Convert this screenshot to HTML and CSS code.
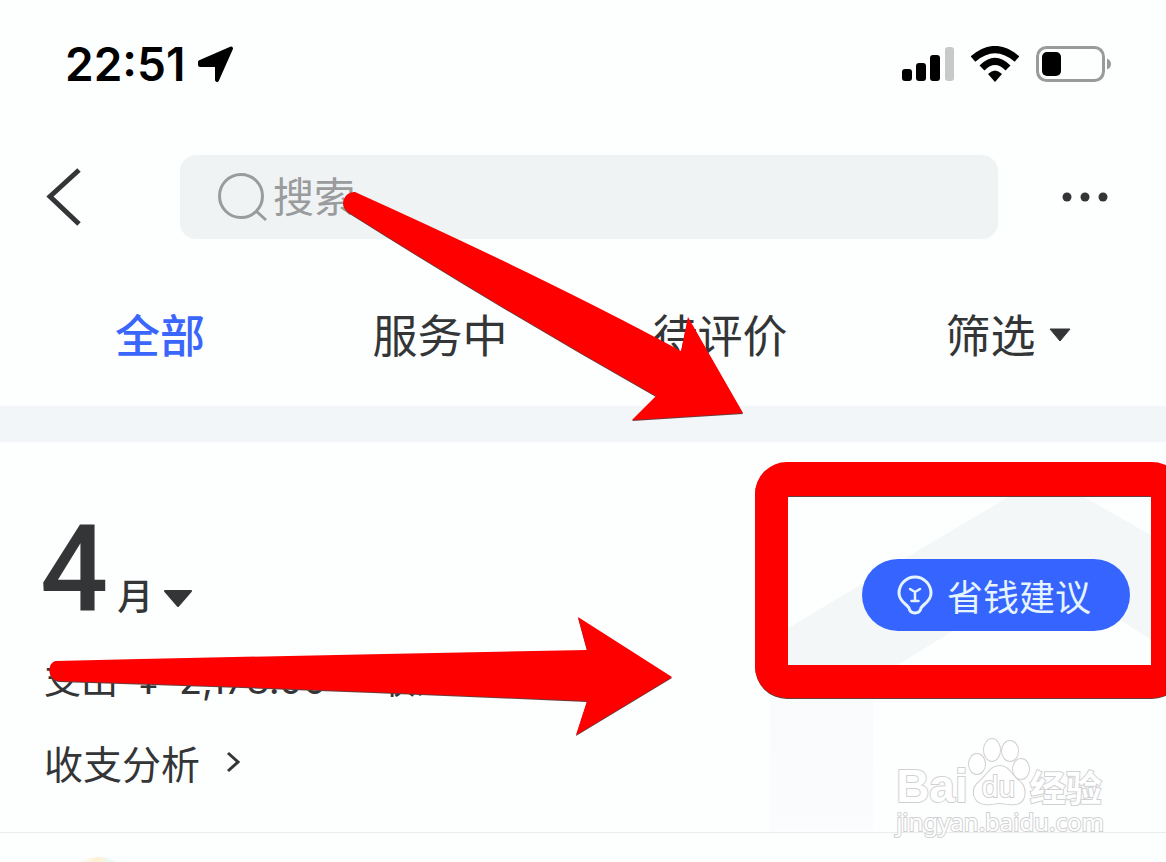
FILE: index.html
```html
<!DOCTYPE html>
<html lang="zh-CN">
<head>
	<meta charset="utf-8">
	<title>账单</title>
	<meta name="viewport" content="width=device-width, initial-scale=1">
	<link rel="stylesheet" href="styles.css">
</head>
<body>
	<div class="status-bar">
		<div class="status-left">
			<span class="clock">22:51</span>
			<svg width="38" height="38" viewBox="0 0 38 38">
				<path d="M3 17 34 3.500 20 35V20H3Z" stroke="#000" stroke-width="4" stroke-linejoin="round"/>
			</svg>
		</div>
		<div class="status-right">
			<svg width="54" height="36" viewBox="0 0 54 36">
				<rect x="2" y="23" width="10" height="12" rx="3"/>
				<rect x="16" y="17" width="10" height="18" rx="3"/>
				<rect x="30" y="9" width="10" height="26" rx="3"/>
				<rect x="45" y="1" width="9" height="34" rx="3" fill="#c9c9c9"/>
			</svg>
			<svg width="48" height="36" viewBox="0 0 48 36">
				<path d="M2 13Q24-6 46 13M11 22Q24 9 37 22" fill="none" stroke="#000" stroke-width="7"/>
				<path d="M17 28Q24 21 31 28L24 36Z"/>
			</svg>
			<svg width="76" height="36" viewBox="0 0 76 36">
				<rect x="1.500" y="1.500" width="66" height="33" rx="9" fill="none" stroke="#9a9a9c" stroke-width="3"/>
				<rect x="6" y="6" width="19" height="24" rx="5"/>
				<path d="M71 12.500Q75 14 75 18T71 23.500Z" fill="#9a9a9c"/>
			</svg>
		</div>
	</div>

	<header class="top-nav">
		<button class="icon-button" aria-label="返回">
			<svg width="38" height="58" viewBox="0 0 38 58"><path d="M35 2 6 28.500 35 56" fill="none" stroke="#333536" stroke-width="5"/></svg>
		</button>
		<label class="search-box">
			<svg width="50" height="50" viewBox="0 0 50 50">
				<circle cx="23" cy="24" r="21.500"/>
				<path d="M38 39 48 48"/>
			</svg>
			<input type="search" placeholder="搜索" aria-label="搜索">
		</label>
		<button class="icon-button" aria-label="更多">
			<svg width="46" height="10" viewBox="0 0 46 10" fill="#333536"><circle cx="5" cy="5" r="4.500"/><circle cx="23" cy="5" r="4.500"/><circle cx="41" cy="5" r="4.500"/></svg>
		</button>
	</header>

	<nav class="tabs">
		<button class="tab active">全部</button>
		<button class="tab">服务中</button>
		<button class="tab">待评价</button>
		<button class="tab">筛选
			<svg width="22" height="18" viewBox="0 0 22 18"><path d="M1 5H21L11 17Z" fill="#333536" stroke="#333536" stroke-linejoin="round"/></svg>
		</button>
	</nav>

	<main class="summary">
		<svg class="backdrop" width="396" height="389" viewBox="0 0 396 389">
			<defs>
				<linearGradient id="fade" x1="0" y1="0" x2="0" y2="1"><stop offset="0" stop-color="#f5f8fa"/><stop offset="1" stop-color="#fbfcfd"/></linearGradient>
			</defs>
			<path d="M0 197 240 54Q276 33 312 54L396 102V207L306 150Q276 132 246 150L103 238V389H0Z" fill="url(#fade)"/>
			<path d="M0 197 240 54Q276 33 312 54L396 102V207L306 150Q276 132 246 150L103 238H0Z" fill="#f4f7f8"/>
		</svg>
		<div class="summary-head">
			<button class="month">
				<span class="month-number">4</span>
				<span class="month-unit">月</span>
				<svg width="30" height="20" viewBox="0 0 30 20"><path d="M2 1H28L15 16Z" fill="#333536" stroke="#333536" stroke-width="2" stroke-linejoin="round"/></svg>
			</button>
			<button class="advice">
				<svg width="36" height="40" viewBox="0 0 36 40" fill="none" stroke="#e6f4ff" stroke-width="3" stroke-linecap="round" stroke-linejoin="round">
					<path d="M12 33C10 29 2 27 2 18A16 16 0 0 1 34 18C34 27 26 29 24 33Q23 38 18 38T12 33Z"/>
					<path d="M13 14 18 17 23 14M18 17V26M14.500 26H21.500" stroke-width="2.500"/>
				</svg>
				省钱建议
			</button>
		</div>
		<p class="totals"><span>支出</span><span class="amount">¥</span><span class="amount">2,178.00</span><span class="income">收入</span></p>
		<a class="analysis" href="#">收支分析
			<svg width="14" height="22" viewBox="0 0 14 22"><path d="M2 2 12 11 2 20" fill="none" stroke="#333536" stroke-width="3"/></svg>
		</a>
	</main>

	<section class="records">
		<span class="record-icon"></span>
	</section>

	<div class="watermark">
		<div class="watermark-logo">
			<span class="watermark-latin">Bai</span>
			<span class="paw">
				<svg width="62" height="68" viewBox="0 0 62 68">
					<ellipse cx="9" cy="26" rx="8" ry="10"/><ellipse cx="24" cy="12" rx="8" ry="11"/>
					<ellipse cx="42" cy="13" rx="8" ry="10"/><ellipse cx="53" cy="31" rx="8" ry="10"/>
					<path d="M32 28C41 28 44 38 51 43C59 49 59 65 47 66C40 67 37 65 32 65S23 67 17 66C4 65 3 50 11 44C20 37 22 28 32 28Z"/>
				</svg>
				<span class="paw-text">du</span>
			</span>
			<span class="watermark-cn">经验</span>
		</div>
		<div class="watermark-url">jingyan.baidu.com</div>
	</div>

	<!-- red markers drawn over the page -->
	<svg class="markers" width="1180" height="740" viewBox="0 0 1180 740">
		<g class="marker-shadow">
			<path d="M355 192Q550 280 681 351L688 317 743 413 632 420 656 396Q500 308 348 212A11 11 0 0 1 355 192Z"/>
			<path d="M56 661Q320 655 587 650L578 617 672 677 576 735 587 701Q320 689 59 681C47 680 47 662 56 661Z"/>
			<path fill-rule="evenodd" d="M787 462H1152A32 32 0 0 1 1184 494V666A32 32 0 0 1 1152 698H787A32 32 0 0 1 755 666V494A32 32 0 0 1 787 462ZM788 496V665H1151V496Z"/>
		</g>
	</svg>
</body>
</html>
```

FILE: styles.css
```css
* { box-sizing: border-box; }

body {
  position: relative;
  margin: 0;
  min-height: 100vh;
  overflow-x: hidden;
  background: #fdfefe;
  color: #333536;
  font-family: "Noto Sans CJK SC", sans-serif;
}

svg { display: block; flex: none; }

button {
  padding: 0;
  border: 0;
  background: none;
  color: inherit;
  font: inherit;
  cursor: pointer;
}

.status-bar {
  display: flex;
  justify-content: space-between;
  align-items: center;
  height: 128px;
  padding: 0 54px 0 65px;
}

.status-left { display: flex; align-items: center; gap: 12px; }
.status-right { display: flex; align-items: center; gap: 17px; }

.clock {
  color: #000;
  font: 600 46px/56px Inter, sans-serif;
}

.top-nav {
  display: flex;
  align-items: center;
  padding: 27px 58px 0 44px;
}

.search-box {
  display: flex;
  flex: 1;
  align-items: center;
  gap: 5px;
  height: 84px;
  margin: 0 64px 0 98px;
  padding: 0 38px;
  border-radius: 16px;
  background: #eff3f4;
}

.search-box svg { fill: none; stroke: #999b9c; stroke-width: 3; }

.search-box input {
  flex: 1;
  min-width: 0;
  padding: 0 0 6px;
  border: 0;
  outline: 0;
  background: none;
  font: 41px/60px "Noto Sans CJK SC", sans-serif;
}

.search-box input::placeholder { color: #999b9c; opacity: 1; }

.tabs {
  display: grid;
  grid-template-columns: 35fr 35fr 35fr 37fr;
  height: 167px;
  padding: 24px 10px 0 20px;
}

.tab {
  display: flex;
  justify-content: center;
  align-items: center;
  gap: 13px;
  height: 140px;
  font-size: 45px;
}

.tab.active { color: #3a66fb; font-weight: 500; }

.summary {
  position: relative;
  height: 427px;
  padding: 75px 36px 0 44px;
  border-top: 36px solid #f3f6f8;
  border-bottom: 1px solid #e9ebed;
}

.backdrop { position: absolute; right: 0; top: 0; }

.summary-head {
  position: relative;
  display: flex;
  justify-content: space-between;
  align-items: center;
  height: 110px;
}

.month { display: flex; align-items: baseline; margin-top: -6px; }
.month-number { margin-left: -4px; font: 500 120px/110px Roboto, sans-serif; }
.month-unit { margin: 0 10px 0 9px; font-size: 36px; font-weight: 500; line-height: 48px; }

.advice {
  display: flex;
  align-items: center;
  gap: 14px;
  height: 72px;
  margin-top: 46px;
  padding: 0 39px 0 35px;
  border-radius: 36px;
  background: #3565fe;
  color: #e6f4ff;
  font-size: 36px;
  line-height: 70px;
}

.totals {
  position: relative;
  display: flex;
  align-items: baseline;
  gap: 20px;
  margin: 24px 0 0;
  font-size: 37px;
  line-height: 54px;
}

.amount { font: 38px/50px Inter, sans-serif; }
.income { margin-left: 32px; }

.analysis {
  position: relative;
  display: flex;
  align-items: center;
  gap: 26px;
  margin-top: 30px;
  color: inherit;
  font-size: 39px;
  line-height: 54px;
  text-decoration: none;
}

.records { height: 29px; padding: 24px 0 0 64px; overflow: hidden; }

.record-icon {
  display: block;
  width: 68px;
  height: 68px;
  border-radius: 50%;
  background: linear-gradient(90deg, #fdfefe 20%, #fff0d2 48%, #e6fbfa 72%, #fdfefe);
}

.watermark {
  position: absolute;
  top: 738px;
  right: 62px;
  color: #fff;
  -webkit-text-stroke: 2px #d0d1d2;
  paint-order: stroke fill;
}

.watermark-logo { display: flex; align-items: flex-end; height: 68px; }
.watermark-latin { font: 700 46px/40px "Liberation Sans", sans-serif; }
.watermark-cn { font-size: 36px; font-weight: 700; line-height: 40px; }
.watermark-url { font: 24px/32px "Noto Sans", sans-serif; }

.paw { position: relative; }
.paw svg { fill: #fff; stroke: #d0d1d2; stroke-width: 2; }
.paw-text {
  position: absolute;
  left: 14px;
  bottom: 4px;
  font: 30px/30px "Liberation Sans", sans-serif;
}

.markers {
  position: absolute;
  left: 0;
  top: 0;
  fill: #fe0000;
  pointer-events: none;
}

.marker-shadow { filter: drop-shadow(0 1px 0 #6b3a3a); }
```
